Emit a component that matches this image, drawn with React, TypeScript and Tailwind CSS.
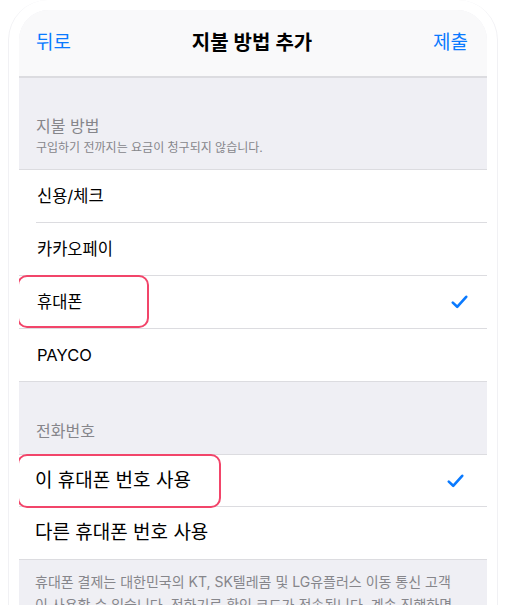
import React from "react";

const font = { fontFamily: '"Inter", "Noto Sans CJK KR", sans-serif' };

const Check = () => (
  <svg width="17" height="14" viewBox="0 0 17 14" fill="none">
    <path d="M1.8 7.6 L6.2 11.8 L15.2 1.8" stroke="#0a7aff" strokeWidth="2.6" strokeLinecap="round" strokeLinejoin="round" />
  </svg>
);

const methods = [
  { label: "신용/체크", inset: true },
  { label: "카카오페이" },
  { label: "휴대폰", checked: true, marked: true },
  { label: "PAYCO", last: true },
];

export default function App() {
  return (
    <div className="w-[506px] h-[605px] overflow-hidden bg-white" style={font}>
      <div className="mx-[8px] h-[640px] pt-[10px] px-[10px] border-x border-[#f1f1f4] rounded-t-[40px]">
        <div className="h-full rounded-t-[30px] overflow-hidden bg-[#efeff4]">
          {/* nav bar */}
          <div className="h-[68px] flex items-center justify-between pl-[17px] pr-[19px] bg-[#f9f9fa] border-b-2 border-[#dcdce0]">
            <span className="text-[19px] leading-[24px] text-[#0a7aff]">뒤로</span>
            <span className="text-[20px] leading-[24px] font-semibold text-black">지불 방법 추가</span>
            <span className="text-[19px] leading-[24px] text-[#0a7aff]">제출</span>
          </div>

          <div className="pt-[38px] pb-[13px] px-[17px]">
            <div className="text-[16px] leading-[20px] text-[#86868b]">지불 방법</div>
            <div className="mt-[4px] text-[12px] leading-[16px] text-[#86868b]">구입하기 전까지는 요금이 청구되지 않습니다.</div>
          </div>

          <div className="bg-white border-y border-[#dcdce0]">
            {methods.map((m) => (
              <div key={m.label} className="relative">
                <div className="h-[52px] flex items-center justify-between pl-[18px] pr-[19px]">
                  <span className="text-[16.5px] leading-[20px] text-black">{m.label}</span>
                  {m.checked && <Check />}
                </div>
                {m.marked && (
                  <div className="absolute -left-[2px] -top-[1px] w-[132px] h-[53px] rounded-[10px] border-2 border-[#f2456a]" />
                )}
                {!m.last && (
                  <div className={`h-px bg-[#dcdce0] ${m.inset ? "ml-[17px]" : ""}`} />
                )}
              </div>
            ))}
          </div>

          <div className="pt-[39px] pb-[13px] px-[17px]">
            <div className="text-[16px] leading-[20px] text-[#86868b]">전화번호</div>
          </div>

          <div className="bg-white border-y border-[#dcdce0]">
            <div className="relative">
              <div className="h-[51px] flex items-center justify-between pl-[16px] pr-[23px]">
                <span className="text-[19px] leading-[22px] text-black">이 휴대폰 번호 사용</span>
                <Check />
              </div>
              <div className="absolute -left-[2px] -top-[1px] w-[204px] h-[54px] rounded-[10px] border-2 border-[#f2456a]" />
              <div className="h-px bg-[#dcdce0]" />
            </div>
            <div className="h-[52px] flex items-center pl-[16px]">
              <span className="text-[19px] leading-[22px] text-black">다른 휴대폰 번호 사용</span>
            </div>
          </div>

          <div className="pt-[10px] px-[16px] text-[14px] leading-[23px] text-[#86868b]">
            <div className="whitespace-nowrap">휴대폰 결제는 대한민국의 KT, SK텔레콤 및 LG유플러스 이동 통신 고객</div>
            <div className="whitespace-nowrap">이 사용할 수 있습니다. 전화기로 확인 코드가 전송됩니다. 계속 진행하면</div>
          </div>
        </div>
      </div>
    </div>
  );
}
